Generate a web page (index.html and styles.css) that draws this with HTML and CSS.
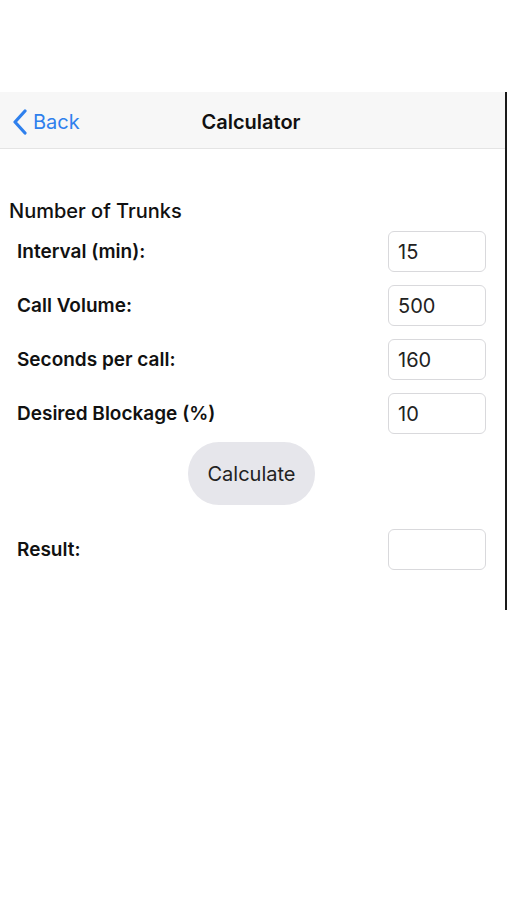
FILE: index.html
```html
<!DOCTYPE html>
<html lang="en">
<head>
    <meta charset="UTF-8">
    <meta name="viewport" content="width=device-width, initial-scale=1.0">
    <title>Calculator</title>
    <link rel="stylesheet" href="styles.css">
</head>
<body>
    <div class="screen">
        <nav class="nav">
            <a class="back" href="#">
                <svg class="chevron" width="18" height="26" viewBox="0 0 18 26">
                    <path d="M14 2 L4 13 L14 24" fill="none" stroke="currentColor" stroke-width="3.2" stroke-linecap="round" stroke-linejoin="round"/>
                </svg>
                <span>Back</span>
            </a>
            <h1 class="title">Calculator</h1>
        </nav>

        <div class="content">
            <h2 class="section">Number of Trunks</h2>
            <div class="form">
                <div class="row">
                    <label for="interval">Interval (min):</label>
                    <input id="interval" type="text" value="15">
                </div>
                <div class="row">
                    <label for="volume">Call Volume:</label>
                    <input id="volume" type="text" value="500">
                </div>
                <div class="row">
                    <label for="seconds">Seconds per call:</label>
                    <input id="seconds" type="text" value="160">
                </div>
                <div class="row">
                    <label for="blockage">Desired Blockage (%)</label>
                    <input id="blockage" type="text" value="10">
                </div>
            </div>
            <div class="actions">
                <button class="calc">Calculate</button>
            </div>
            <div class="row result">
                <label for="result">Result:</label>
                <input id="result" type="text" value="">
            </div>
        </div>
    </div>
</body>
</html>
```

FILE: styles.css
```css
:root {
    --blue: #2f80ed;
    --text: #111;
    --field-border: #d9d9dc;
    --nav-bg: #f7f7f7;
    --button-bg: #e6e6eb;
}

body {
    margin: 0;
    background: #fff;
    font-family: Inter, "Liberation Sans", sans-serif;
    color: var(--text);
}

.screen {
    margin-top: 92px;
    height: 518px;
    border-right: 2px solid #1a1a1a;
    box-sizing: border-box;
}

.nav {
    height: 57px;
    background: var(--nav-bg);
    border-bottom: 1px solid #e4e4e4;
    box-sizing: border-box;
    display: grid;
    grid-template-columns: 1fr auto 1fr;
    align-items: center;
    padding: 4px 12px 0;
}

.back {
    display: flex;
    align-items: center;
    gap: 4px;
    color: var(--blue);
    text-decoration: none;
    font-size: 20px;
}

.chevron {
    display: block;
    margin-left: -1px;
}

.title {
    margin: 0;
    font-size: 20px;
    font-weight: 600;
    margin-left: -3px;
}

.content {
    padding: 50px 19px 0 9px;
}

.section {
    margin: 0 0 8px;
    font-size: 20px;
    font-weight: 500;
    line-height: 24px;
}

.form {
    display: flex;
    flex-direction: column;
    gap: 13px;
}

.row {
    display: flex;
    align-items: center;
    justify-content: space-between;
    padding-left: 8px;
}

.row label {
    font-size: 19px;
    font-weight: 600;
}

.row input {
    width: 98px;
    height: 41px;
    box-sizing: border-box;
    border: 1px solid var(--field-border);
    border-radius: 6px;
    padding: 0 9px;
    font-family: inherit;
    font-size: 20px;
    color: #222;
    outline: none;
}

.actions {
    display: flex;
    justify-content: center;
    margin-top: 8px;
    padding-left: 8px;
}

.calc {
    width: 127px;
    height: 63px;
    border: none;
    border-radius: 31px;
    background: var(--button-bg);
    font-family: inherit;
    font-size: 20px;
    color: #222;
}

.result {
    margin-top: 24px;
}
```
